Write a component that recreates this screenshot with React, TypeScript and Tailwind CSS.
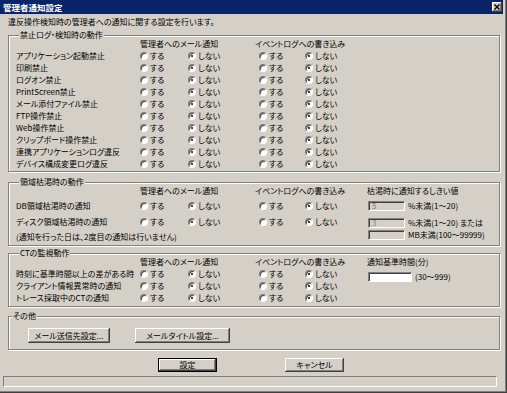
import React from "react";

const Radio = ({ checked }: { checked?: boolean }) => (
  <span className="relative inline-block w-[8px] h-[8px] shrink-0 rounded-full bg-white border border-t-[#808080] border-l-[#808080] border-r-white border-b-white shadow-[inset_1px_1px_0_#404040]">
    {checked && <span className="absolute left-[2px] top-[2px] w-[2px] h-[2px] rounded-full bg-black" />}
  </span>
);

const Opt = ({ checked, label, className }: { checked?: boolean; label: string; className: string }) => (
  <div className={"flex items-center " + className}>
    <Radio checked={checked} />
    <span className="ml-[2px]">{label}</span>
  </div>
);

const Pairs = () => (
  <>
    <Opt label="する" className="w-[48px]" />
    <Opt label="しない" checked className="w-[71px]" />
    <Opt label="する" className="w-[46px]" />
    <Opt label="しない" checked className="w-[56px]" />
  </>
);

const Row = ({ label }: { label: string }) => (
  <div className="flex items-center h-[12px] leading-[12px]">
    <div className="w-[124px] whitespace-nowrap">{label}</div>
    <Pairs />
  </div>
);

const Header = ({ className }: { className: string }) => (
  <div className={"flex whitespace-nowrap " + className}>
    <div className="w-[124px]" />
    <div className="w-[115px]">管理者へのメール通知</div>
    <div>イベントログへの書き込み</div>
  </div>
);

const Group = ({ title, className, children }: { title: string; className: string; children: React.ReactNode }) => (
  <fieldset className={"ml-[8px] w-[492px] border border-[#808080] shadow-[inset_1px_1px_0_#fff,1px_1px_0_#fff] " + className}>
    <legend className="ml-[3px] px-[1px] h-[8px] leading-[8px] bg-[#d4d0c8] whitespace-nowrap">{title}</legend>
    {children}
  </fieldset>
);

const Field = ({ value, className, white }: { value?: string; className: string; white?: boolean }) => (
  <div
    className={
      "h-[10px] border border-t-[#808080] border-l-[#808080] border-r-white border-b-white shadow-[inset_1px_1px_0_#404040] pl-[3px] text-[8px] leading-[8px] text-[#808080] " +
      (white ? "bg-white " : "bg-[#d4d0c8] ") +
      className
    }
  >
    {value}
  </div>
);

const raised = "shadow-[inset_-1px_-1px_0_#404040,inset_1px_1px_0_#fff,inset_-2px_-2px_0_#808080]";

export default function App() {
  return (
    <div className="w-[507px] h-[393px] bg-[#d4d0c8] text-black text-[8px] leading-[12px] font-normal font-['Noto_Sans_CJK_JP',sans-serif] [font-feature-settings:'palt'] overflow-hidden shadow-[inset_-1px_-1px_0_#404040,inset_-2px_-2px_0_#808080] flex flex-col">
      {/* title bar */}
      <div className="w-[503px] h-[14px] bg-[#0a246a] flex items-center justify-between">
        <span className="pl-[3px] text-white font-bold text-[8.5px] leading-[14px]">管理者通知設定</span>
        <div className={"mr-[1px] w-[10px] h-[10px] bg-[#d4d0c8] flex items-center justify-center " + raised}>
          <svg width="6" height="6" viewBox="0 0 6 6">
            <path d="M0.5 0.5 L5.5 5.5 M5.5 0.5 L0.5 5.5" stroke="#000" strokeWidth="1.4" />
          </svg>
        </div>
      </div>

      <div className="mt-[2px] h-[12px] pl-[8px] whitespace-nowrap">違反操作検知時の管理者への通知に関する設定を行います。</div>

      {/* group 1 */}
      <Group title="禁止ログ・検知時の動作" className="mt-[3px] pl-[7px] pb-[1px]">
        <Header className="h-[11px] leading-[10px]" />
        <Row label="アプリケーション起動禁止" />
        <Row label="印刷禁止" />
        <Row label="ログオン禁止" />
        <Row label="PrintScreen禁止" />
        <Row label="メール添付ファイル禁止" />
        <Row label="FTP操作禁止" />
        <Row label="Web操作禁止" />
        <Row label="クリップボード操作禁止" />
        <Row label="連携アプリケーションログ違反" />
        <Row label="デバイス構成変更ログ違反" />
      </Group>

      {/* group 2 */}
      <Group title="領域枯渇時の動作" className="mt-[6px] pl-[7px] pb-[2px]">
        <div className="flex">
          <div className="w-[351px]">
            <Header className="h-[9px] leading-[9px]" />
            <div className="mt-[5px]">
              <Row label="DB領域枯渇時の通知" />
            </div>
            <div className="mt-[4px]">
              <Row label="ディスク領域枯渇時の通知" />
            </div>
            <div className="mt-[3px] h-[12px] whitespace-nowrap">(通知を行った日は、2度目の通知は行いません)</div>
          </div>
          <div className="whitespace-nowrap">
            <div className="h-[9px] leading-[9px]">枯渇時に通知するしきい値</div>
            <div className="mt-[6px] flex items-center pl-[1px]">
              <Field value="5" className="w-[37px]" />
              <span className="ml-[3px] leading-[10px]">%未満(1～20)</span>
            </div>
            <div className="mt-[7px] flex items-center pl-[1px]">
              <Field value="3" className="w-[37px]" />
              <span className="ml-[3px] leading-[10px]">%未満(1～20) または</span>
            </div>
            <div className="mt-[2px] flex items-center pl-[1px]">
              <Field className="w-[37px]" />
              <span className="ml-[3px] leading-[10px]">MB未満(100～99999)</span>
            </div>
          </div>
        </div>
      </Group>

      {/* group 3 */}
      <Group title="CTの監視動作" className="mt-[3px] pl-[7px] pb-[2px]">
        <div className="flex">
          <div className="w-[351px]">
            <Header className="h-[11px] leading-[10px]" />
            <Row label="時刻に基準時間以上の差がある時" />
            <Row label="クライアント情報異常時の通知" />
            <Row label="トレース採取中のCTの通知" />
          </div>
          <div className="whitespace-nowrap">
            <div className="h-[11px] leading-[10px]">通知基準時間(分)</div>
            <div className="mt-[4px] flex items-center pl-[1px]">
              <Field white className="w-[44px]" />
              <span className="ml-[3px] leading-[10px]">(30～999)</span>
            </div>
          </div>
        </div>
      </Group>

      {/* group 4 */}
      <Group title="その他" className="mt-[5px] pb-[6px]">
        <div className="mt-[8px] ml-[19px] flex gap-[25px]">
          <div className={"w-[82px] h-[15px] flex items-center justify-center " + raised}>メール送信先設定...</div>
          <div className={"w-[95px] h-[15px] flex items-center justify-center " + raised}>メールタイトル設定...</div>
        </div>
      </Group>

      <div className="mt-[8px] pl-[158px] flex gap-[68px]">
        <div className={"w-[59px] h-[14px] border border-black flex items-center justify-center " + raised}>設定</div>
        <div className={"w-[59px] h-[14px] flex items-center justify-center " + raised}>キャンセル</div>
      </div>

      <div className="mt-[4px] ml-[3px] w-[494px] h-[11px] border border-t-[#808080] border-l-[#808080] border-r-white border-b-white" />
    </div>
  );
}
